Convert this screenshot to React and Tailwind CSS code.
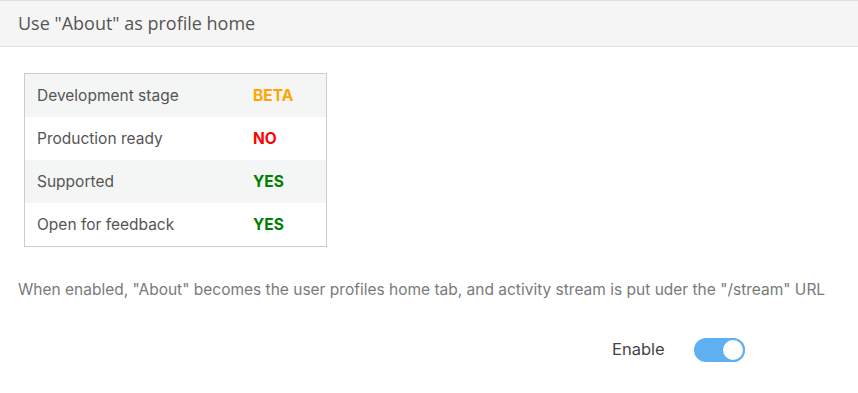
import React, { useState } from "react";

const rows = [
  { label: "Development stage", value: "BETA", color: "text-[#ffa500]" },
  { label: "Production ready", value: "NO", color: "text-[#ff0000]" },
  { label: "Supported", value: "YES", color: "text-[#008000]" },
  { label: "Open for feedback", value: "YES", color: "text-[#008000]" },
];

export default function App() {
  const [enabled, setEnabled] = useState(true);

  return (
    <div className="w-[858px] h-[393px] bg-white overflow-hidden">
      <div className="h-[47px] bg-[#f5f5f5] border-t border-b border-[#e0e0e0] px-[18px] flex items-center font-['Open_Sans',sans-serif] text-[18px] text-[#555]">
        Use "About" as profile home
      </div>

      <div className="px-[24px] pt-[26px] font-['Inter','Liberation_Sans',sans-serif]">
        <div className="w-[303px] border border-[#cccccc]">
          {rows.map((r, i) => (
            <div
              key={r.label}
              className={`h-[43px] flex items-center text-[15.5px] ${i % 2 === 0 ? "bg-[#f4f5f5]" : "bg-white"}`}
            >
              <div className="w-[228px] pl-[12px] text-[#555]">{r.label}</div>
              <div className={`font-bold ${r.color}`}>{r.value}</div>
            </div>
          ))}
        </div>
      </div>

      <p className="px-[18px] mt-[31px] font-['Inter','Liberation_Sans',sans-serif] text-[15.5px] text-[#7a7a7a]">
        When enabled, "About" becomes the user profiles home tab, and activity stream is put uder the "/stream" URL
      </p>

      <div className="mt-[36px] flex items-center pl-[612px] gap-[29px] font-['Inter','Liberation_Sans',sans-serif]">
        <span className="text-[16.5px] text-[#444]">Enable</span>
        <button
          onClick={() => setEnabled(!enabled)}
          className={`relative w-[51px] h-[24px] rounded-full ${enabled ? "bg-[#5fb0f0]" : "bg-[#ccc]"}`}
        >
          <span
            className={`absolute top-0 w-[24px] h-[24px] rounded-full bg-white border-2 border-[#5fb0f0] ${enabled ? "right-0" : "left-0"}`}
          />
        </button>
      </div>
    </div>
  );
}
